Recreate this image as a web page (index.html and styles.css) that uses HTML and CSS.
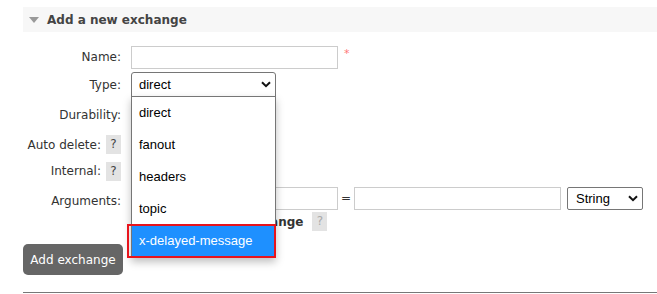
FILE: index.html
```html
<!DOCTYPE html>
<html lang="en">
<head>
    <meta charset="UTF-8">
    <title>Exchanges</title>
    <link rel="stylesheet" href="styles.css">
</head>
<body>
    <div class="page">
        <div class="section-head">
            <span class="toggle"></span>
            Add a new exchange
        </div>

        <form class="exchange-form">
            <div class="form-grid">
                <label class="field-label">Name:</label>
                <div class="field">
                    <input type="text" class="text-input">
                    <span class="mand">*</span>
                </div>

                <label class="field-label">Type:</label>
                <div class="field type-field">
                    <div class="select-box open">
                        <span>direct</span>
                        <svg class="chevron" width="10" height="7" viewBox="0 0 10 7"><path d="M1 1.2 L5 5.2 L9 1.2" fill="none" stroke="#111" stroke-width="2"/></svg>
                    </div>
                    <ul class="dropdown">
                        <li>direct</li>
                        <li>fanout</li>
                        <li>headers</li>
                        <li>topic</li>
                        <li class="selected">x-delayed-message</li>
                    </ul>
                    <!-- marca vermelha do print -->
                    <div class="mark"></div>
                </div>

                <label class="field-label">Durability:</label>
                <div class="field"><select class="small-select"><option>Durable</option></select></div>

                <label class="field-label">Auto delete: <span class="help">?</span></label>
                <div class="field"><select class="small-select"><option>No</option></select></div>

                <label class="field-label">Internal: <span class="help">?</span></label>
                <div class="field"><select class="small-select"><option>No</option></select></div>

                <label class="field-label args-label">Arguments:</label>
                <div class="field args">
                    <input type="text" class="text-input">
                    <span class="eq">=</span>
                    <input type="text" class="text-input">
                    <div class="select-box value-type">
                        <span>String</span>
                        <svg class="chevron" width="10" height="7" viewBox="0 0 10 7"><path d="M1 1.2 L5 5.2 L9 1.2" fill="none" stroke="#111" stroke-width="2"/></svg>
                    </div>
                </div>

                <span></span>
                <div class="field alt-row">
                    <span class="alt-link">Add Alternate exchange</span>
                    <span class="help light">?</span>
                </div>
            </div>

            <button type="button" class="add-button">Add exchange</button>
        </form>

        <div class="rule"></div>
    </div>
</body>
</html>
```

FILE: styles.css
```css
body {
    margin: 0;
    font-family: "DejaVu Sans", Verdana, sans-serif;
    font-size: 12px;
    color: #333;
    background-color: #fff;
}
.page {
    padding: 7px 0 0 23px;
}
.section-head {
    height: 25px;
    background-color: #f7f7f7;
    display: flex;
    align-items: center;
    gap: 8px;
    padding-left: 6px;
    font-weight: bold;
    color: #444;
}
.toggle {
    width: 0;
    height: 0;
    border-left: 5.5px solid transparent;
    border-right: 5.5px solid transparent;
    border-top: 6px solid #999;
}
.form-grid {
    margin-top: 11px;
    display: grid;
    grid-template-columns: 98px auto;
    grid-template-rows: 28px 27px 34px 25px 28px 26px 21px;
    column-gap: 10px;
    align-items: center;
}
.field-label {
    justify-self: end;
    display: flex;
    align-items: center;
    gap: 5px;
    white-space: nowrap;
}
.args-label {
    padding-top: 5px;
}
.field {
    display: flex;
    align-items: center;
}
.text-input {
    box-sizing: border-box;
    width: 207px;
    height: 23px;
    margin: 0;
    border: 1px solid #ccc;
    padding: 2px 4px;
}
.mand {
    color: #f77;
    margin-left: 6px;
    margin-top: -8px;
    font-size: 11px;
}
.type-field {
    position: relative;
}
.select-box {
    box-sizing: border-box;
    width: 145px;
    height: 25px;
    border: 1px solid #767676;
    border-radius: 3px;
    display: flex;
    align-items: center;
    justify-content: space-between;
    padding: 0 4px 0 7px;
    font-family: "Liberation Sans", Arial, sans-serif;
    font-size: 13px;
    color: #000;
    background-color: #fff;
}
.select-box.open {
    border-radius: 3px 3px 0 0;
}
.dropdown {
    position: absolute;
    top: 24px;
    left: 0;
    z-index: 2;
    box-sizing: border-box;
    width: 145px;
    margin: 0;
    padding: 0;
    list-style: none;
    background-color: #fff;
    border: 1px solid #767676;
    box-shadow: 0 4px 8px rgba(0, 0, 0, 0.25);
    font-family: "Liberation Sans", Arial, sans-serif;
    font-size: 13px;
    color: #000;
}
.dropdown li {
    height: 32px;
    line-height: 32px;
    padding-left: 7px;
}
.dropdown li.selected {
    background-color: #1e90ff;
    color: #fff;
}
.mark {
    position: absolute;
    z-index: 3;
    top: 152px;
    left: -4px;
    box-sizing: border-box;
    width: 149px;
    height: 34px;
    border: 2px solid #e8141c;
}
.small-select {
    width: 90px;
    height: 22px;
}
.help {
    display: inline-block;
    width: 15px;
    height: 19px;
    line-height: 19px;
    text-align: center;
    background-color: #e3e3e3;
    color: #444;
}
.help.light {
    color: #aaa;
}
.eq {
    width: 16px;
    text-align: center;
}
.value-type {
    width: 76px;
    height: 23px;
    margin-left: 6px;
    border-radius: 2px;
    padding-left: 8px;
}
.alt-row {
    gap: 9px;
    padding-left: 9px;
}
.alt-link {
    font-weight: bold;
}
.add-button {
    margin-top: 12px;
    width: 100px;
    height: 31px;
    border: none;
    border-radius: 5px;
    background-color: #666;
    color: #fff;
    font-family: "DejaVu Sans", Verdana, sans-serif;
    font-size: 12px;
    padding: 0;
}
.rule {
    margin-top: 17px;
    border-top: 1px solid #777;
}
```
